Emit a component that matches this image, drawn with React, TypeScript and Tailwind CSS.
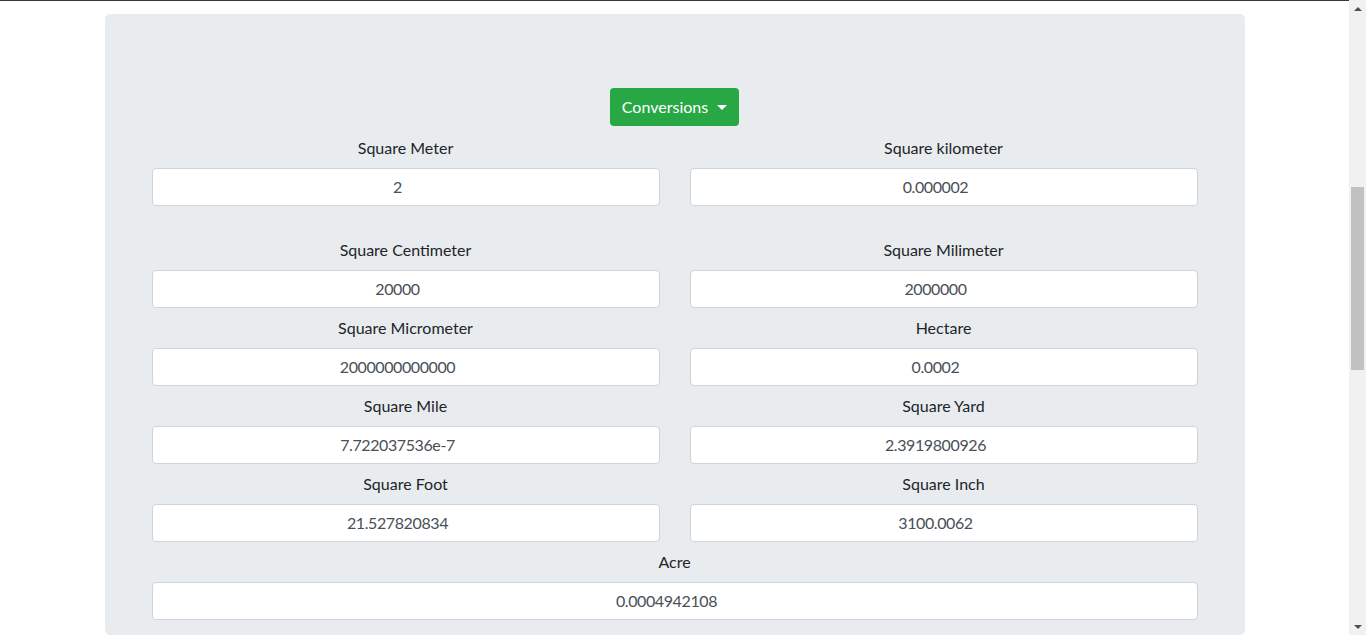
import React from "react";

const rows: [string, string][][] = [
  [
    ["Square Meter", "2"],
    ["Square kilometer", "0.000002"],
  ],
  [
    ["Square Centimeter", "20000"],
    ["Square Milimeter", "2000000"],
  ],
  [
    ["Square Micrometer", "2000000000000"],
    ["Hectare", "0.0002"],
  ],
  [
    ["Square Mile", "7.722037536e-7"],
    ["Square Yard", "2.3919800926"],
  ],
  [
    ["Square Foot", "21.527820834"],
    ["Square Inch", "3100.0062"],
  ],
];

function Field({ label, value }: { label: string; value: string }) {
  return (
    <div className="flex flex-col">
      <label className="text-center text-[16px] leading-6 text-[#212529] mb-2">{label}</label>
      {/* number input: spinner space pushes the centred text a bit left */}
      <input
        readOnly
        value={value}
        className="h-[38px] w-full rounded bg-white border border-[#ced4da] pl-3 pr-[28px] pb-px text-center text-[16px] tracking-[-0.4px] text-[#495057] outline-none"
      />
    </div>
  );
}

export default function App() {
  return (
    <div className="flex h-[635px] overflow-hidden bg-white font-['Segoe_UI','Lato','Open_Sans',sans-serif]">
      <div className="flex-1 flex flex-col">
        {/* navbar edge */}
        <div className="h-px bg-[#343a40]" />
        <div className="w-[1140px] mx-auto mt-[13px] bg-[#e9ecef] rounded-[5px] px-8 pt-16 flex-1">
          <div className="flex justify-center mt-[10px] mb-[10px]">
            <button className="h-[38px] px-3 rounded bg-[#28a745] text-white text-[16px] flex items-center gap-[9px]">
              Conversions
              <span className="w-0 h-0 border-l-[5px] border-r-[5px] border-t-[5px] border-l-transparent border-r-transparent border-t-white mt-[1px]" />
            </button>
          </div>

          {rows.map((row, i) => (
            <div key={i} className={`grid grid-cols-2 gap-[30px] px-[15px] ${i === 0 ? "mb-8" : "mb-2"}`}>
              {row.map(([label, value]) => (
                <Field key={label} label={label} value={value} />
              ))}
            </div>
          ))}

          <div className="px-[15px]">
            <Field label="Acre" value="0.0004942108" />
          </div>
        </div>
      </div>

      {/* scrollbar */}
      <div className="w-[17px] bg-[#f1f1f1] flex flex-col items-center">
        <div className="h-[17px] flex items-center justify-center">
          <span className="w-0 h-0 border-l-[4px] border-r-[4px] border-b-[4px] border-l-transparent border-r-transparent border-b-[#505050]" />
        </div>
        <div className="mt-[170px] w-[13px] h-[183px] bg-[#c1c1c1]" />
        <div className="mt-auto h-[17px] flex items-center justify-center">
          <span className="w-0 h-0 border-l-[4px] border-r-[4px] border-t-[4px] border-l-transparent border-r-transparent border-t-[#505050]" />
        </div>
      </div>
    </div>
  );
}
